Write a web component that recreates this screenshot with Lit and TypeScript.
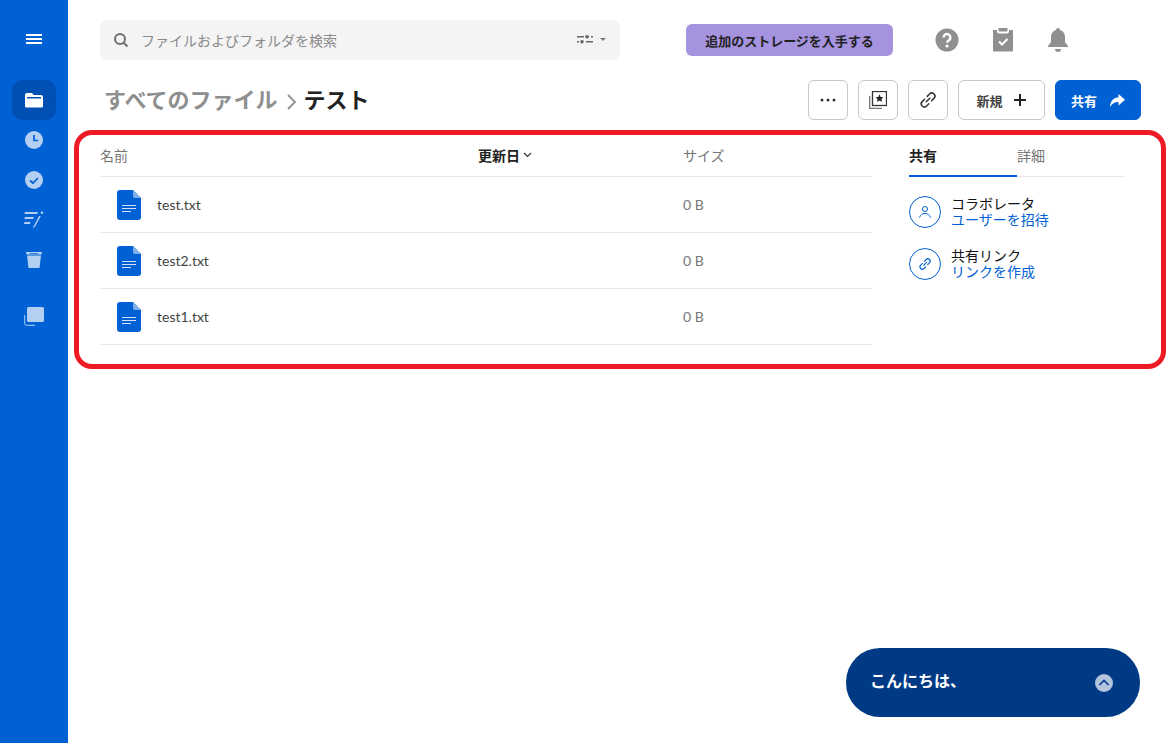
import { LitElement, html, css, svg } from "lit";
import { customElement } from "lit/decorators.js";

type FileRow = { name: string; size: string };

const FILES: FileRow[] = [
  { name: "test.txt", size: "0 B" },
  { name: "test2.txt", size: "0 B" },
  { name: "test1.txt", size: "0 B" },
];

const linkIcon = svg`<path d="M10.2 13.8l3.6-3.6M8.6 11.2l-2.4 2.4a3.1 3.1 0 0 0 4.4 4.4l2.2-2.2M11.2 8.4l2.4-2.4a3.1 3.1 0 0 1 4.4 4.4l-2.4 2.4" fill="none" stroke="currentColor" stroke-width="1.5" stroke-linecap="round"/>`;

@customElement("app-root")
export class AppRoot extends LitElement {
  static override styles = css`
    :host {
      display: flex;
      width: 1173px;
      height: 743px;
      overflow: hidden;
      position: relative;
      background: #fff;
      font-family: Lato, "Noto Sans CJK JP", sans-serif;
      color: #222;
    }
    svg {
      display: block;
      flex: none;
    }

    .rail {
      width: 68px;
      flex: none;
      background: #0061d5;
      display: flex;
      flex-direction: column;
      align-items: center;
      padding-top: 29px;
      box-sizing: border-box;
    }
    .rail .menu {
      margin-left: 0;
      margin-bottom: 31px;
    }
    .rail-item {
      width: 44px;
      height: 40px;
      display: flex;
      align-items: center;
      justify-content: center;
      border-radius: 10px;
      margin-bottom: 0;
    }
    .rail-item.active {
      background: #0050b3;
    }
    .rail-item.gap {
      margin-top: 16px;
    }

    main {
      flex: 1;
      min-width: 0;
      display: flex;
      flex-direction: column;
    }

    .top {
      display: flex;
      align-items: center;
      height: 40px;
      margin-top: 20px;
      padding-left: 32px;
    }
    .search {
      width: 520px;
      height: 40px;
      box-sizing: border-box;
      background: #f4f4f4;
      border-radius: 8px;
      display: flex;
      align-items: center;
      padding: 0 13px 0 13px;
      color: #8a8a8a;
      font-size: 14px;
    }
    .search span {
      flex: 1;
      margin-left: 12px;
    }
    .upsell {
      margin-left: 66px;
      width: 207px;
      height: 32px;
      border-radius: 6px;
      background: #a593e0;
      display: flex;
      align-items: center;
      justify-content: center;
      font-size: 13px;
      font-weight: 700;
      color: #222;
    }
    .top-icons {
      display: flex;
      margin-left: 42px;
      gap: 34px;
      color: #909090;
    }

    .title-row {
      display: flex;
      align-items: center;
      height: 40px;
      margin-top: 20px;
      padding: 0 32px 0 36px;
    }
    .crumbs {
      flex: 1;
      display: flex;
      align-items: center;
      font-size: 22px;
      font-weight: 700;
      line-height: 36px;
    }
    .crumbs .parent {
      color: #8f8f8f;
    }
    .crumbs .sep {
      margin: 4px 7px 0 8px;
    }
    .btn {
      height: 40px;
      box-sizing: border-box;
      border: 1px solid #c8c8c8;
      border-radius: 6px;
      background: #fff;
      display: flex;
      align-items: center;
      justify-content: center;
      margin-left: 10px;
      font-size: 13px;
      font-weight: 700;
      color: #444;
    }
    .btn.icon {
      width: 40px;
    }
    .btn.new {
      width: 87px;
      gap: 10px;
    }
    .btn.share {
      width: 86px;
      gap: 12px;
      background: #0061d5;
      border-color: #0061d5;
      color: #fff;
    }

    .content {
      display: flex;
      margin-top: 14px;
      padding-left: 32px;
    }
    .list {
      width: 772px;
      flex: none;
    }
    .cols {
      display: grid;
      grid-template-columns: 378px 205px 1fr;
      align-items: center;
      height: 42px;
      border-bottom: 1px solid #e8e8e8;
      font-size: 14px;
      color: #767676;
    }
    .cols .sorted {
      display: flex;
      align-items: center;
      gap: 3px;
      font-weight: 700;
      color: #222;
    }
    .cols .tools {
      display: flex;
      align-items: center;
      justify-content: flex-end;
      gap: 16px;
      padding-right: 5px;
    }
    .row {
      display: grid;
      grid-template-columns: 583px 1fr;
      align-items: center;
      height: 55px;
      border-bottom: 1px solid #e8e8e8;
      font-size: 14px;
      color: #444;
    }
    .row .name {
      display: flex;
      align-items: center;
      padding-left: 17px;
      gap: 16px;
    }
    .row .size {
      color: #767676;
    }

    .side {
      width: 216px;
      margin-left: 37px;
      flex: none;
    }
    .tabs {
      display: flex;
      height: 42px;
      border-bottom: 1px solid #e8e8e8;
      font-size: 14px;
      color: #767676;
    }
    .tab {
      width: 108px;
      display: flex;
      align-items: center;
      box-sizing: border-box;
    }
    .tab.active {
      font-weight: 700;
      color: #222;
      border-bottom: 2px solid #0061d5;
      margin-bottom: -1px;
    }
    .tab.second {
      margin-left: 0;
    }
    .actions {
      margin-top: 19px;
      display: flex;
      flex-direction: column;
      gap: 20px;
    }
    .action {
      display: flex;
      align-items: center;
      gap: 10px;
      height: 32px;
    }
    .circle {
      width: 32px;
      height: 32px;
      box-sizing: border-box;
      border: 1px solid #0061d5;
      border-radius: 50%;
      color: #0061d5;
      display: flex;
      align-items: center;
      justify-content: center;
    }
    .action .label {
      font-size: 14px;
      line-height: 16px;
      color: #111;
    }
    .action .link {
      font-size: 14px;
      line-height: 16px;
      color: #0061d5;
    }

    /* red annotation drawn on top of the screenshot */
    .callout {
      position: absolute;
      left: 74px;
      top: 130px;
      width: 1092px;
      height: 239px;
      box-sizing: border-box;
      border: 5px solid #ed1c24;
      border-radius: 18px;
      pointer-events: none;
    }

    .chat {
      position: absolute;
      left: 846px;
      top: 648px;
      width: 294px;
      height: 69px;
      box-sizing: border-box;
      border-radius: 34px;
      background: #003a85;
      color: #fff;
      display: flex;
      align-items: center;
      justify-content: space-between;
      padding: 0 27px 6px 24px;
      font-size: 16px;
      font-weight: 700;
    }
    .chat svg {
      margin-top: 6px;
    }
  `;

  private fileIcon() {
    return html`<svg width="24" height="30" viewBox="0 0 24 30">
      <path d="M3 0h13l8 8v19a3 3 0 0 1-3 3H3a3 3 0 0 1-3-3V3a3 3 0 0 1 3-3z" fill="#0061d5" />
      <path d="M16 0l8 8h-6a2 2 0 0 1-2-2z" fill="#7fb0ea" />
      <path d="M5 15h14v1H5zM5 18h14v1H5zM5 21h9v1H5z" fill="#cfe0f7" />
    </svg>`;
  }

  private renderRail() {
    return html`<nav class="rail">
      <svg class="menu" width="18" height="20" viewBox="0 0 18 20">
        <path d="M1 5h16v2H1zM1 9h16v2H1zM1 13h16v2H1z" fill="#fff" />
      </svg>
      <div class="rail-item active">
        <svg width="18" height="16" viewBox="0 0 18 16">
          <path d="M2 1h5l1.6 2H16a2 2 0 0 1 2 2v9a1.500 1.500 0 0 1-1.500 1.500h-15A1.500 1.500 0 0 1 0 14V3a2 2 0 0 1 2-2z" fill="#fff" />
          <path d="M2 5h14v1.500H2z" fill="#0050b3" />
        </svg>
      </div>
      <div class="rail-item">
        <svg width="18" height="18" viewBox="0 0 18 18">
          <circle cx="9" cy="9" r="9" fill="#b3cff2" />
          <path d="M9 4v5.500h4" fill="none" stroke="#0061d5" stroke-width="1.700" />
        </svg>
      </div>
      <div class="rail-item">
        <svg width="18" height="18" viewBox="0 0 18 18">
          <circle cx="9" cy="9" r="9" fill="#b3cff2" />
          <path d="M5 9.500l3 2.500 5-5" fill="none" stroke="#0061d5" stroke-width="1.700" />
        </svg>
      </div>
      <div class="rail-item">
        <svg width="20" height="18" viewBox="0 0 20 18">
          <path d="M1 1h13l-.8 2H.4zM1 6h9l-.8 2H.4zM.6 11h6l-.8 2H0z" fill="#b3cff2" />
          <path d="M15 5L8.800 17l2-1L16.800 5z" fill="#b3cff2" />
          <circle cx="18" cy="1.800" r="1.300" fill="#b3cff2" />
        </svg>
      </div>
      <div class="rail-item">
        <svg width="16" height="16" viewBox="0 0 16 16">
          <path d="M0 0h16l-.4 2.500H.4z" fill="#b3cff2" />
          <path d="M1 3.500h14L13.500 16h-11z" fill="#b3cff2" />
          <path d="M4 1.300h8v.8H4z" fill="#0061d5" />
        </svg>
      </div>
      <div class="rail-item gap">
        <svg width="20" height="19" viewBox="0 0 20 19">
          <rect x="3" y="0" width="17" height="15" rx="1.500" fill="#b3cff2" />
          <path d="M.7 8v8.500a1.800 1.800 0 0 0 1.800 1.800H11" fill="none" stroke="#b3cff2" stroke-width="1" />
        </svg>
      </div>
    </nav>`;
  }

  private renderTop() {
    return html`<div class="top">
      <div class="search">
        <svg width="16" height="16" viewBox="0 0 16 16">
          <circle cx="7" cy="7" r="5" fill="none" stroke="#6f6f6f" stroke-width="2" />
          <path d="M10.800 10.800L14.500 14.500" stroke="#6f6f6f" stroke-width="2" />
        </svg>
        <span>ファイルおよびフォルダを検索</span>
        <svg width="30" height="10" viewBox="0 0 30 10">
          <path d="M0 1h7v1.500H0zM10 1h2v1.500h-2zM14 1h2v1.500h-2zM0 6h2v1.500H0zM9 6h7v1.500H9z" fill="#666" />
          <circle cx="10" cy="1.800" r="1.800" fill="#666" />
          <circle cx="5" cy="6.800" r="1.800" fill="#666" />
          <path d="M23 3h6l-3 3z" fill="#777" />
        </svg>
      </div>
      <div class="upsell">追加のストレージを入手する</div>
      <div class="top-icons">
        <svg width="24" height="24" viewBox="0 0 24 24">
          <circle cx="12" cy="12" r="11.500" fill="#909090" />
          <path d="M8.600 9.500a3.400 3.400 0 1 1 5.300 2.800c-1.200.8-1.800 1.300-1.800 2.500" fill="none" stroke="#fff" stroke-width="2.400" />
          <circle cx="12" cy="18" r="1.600" fill="#fff" />
        </svg>
        <svg width="20" height="24" viewBox="0 0 20 24">
          <path d="M0 2h4v1.500a2 2 0 0 0 2 2h8a2 2 0 0 0 2-2V2h4v20.500a1 1 0 0 1-1 1H1a1 1 0 0 1-1-1z" fill="#909090" />
          <path d="M5.500 0h9v2.500a1 1 0 0 1-1 1h-7a1 1 0 0 1-1-1z" fill="#909090" />
          <path d="M6 13.500l3 3 5.500-5.500" fill="none" stroke="#fff" stroke-width="2" />
        </svg>
        <svg width="22" height="24" viewBox="0 0 22 24">
          <path d="M11 0a2 2 0 0 1 2 2c3.500 1 5 3.800 5 7v5l3 4v1H1v-1l3-4V9c0-3.200 1.500-6 5-7a2 2 0 0 1 2-2z" fill="#909090" />
          <path d="M8 21h6a3 3 0 0 1-6 0z" fill="#909090" />
        </svg>
      </div>
    </div>`;
  }

  private renderTitle() {
    return html`<div class="title-row">
      <div class="crumbs">
        <span class="parent">すべてのファイル</span>
        <svg class="sep" width="11" height="18" viewBox="0 0 11 18">
          <path d="M2 2l7 7-7 7" fill="none" stroke="#8f8f8f" stroke-width="1.800" />
        </svg>
        <span>テスト</span>
      </div>
      <div class="btn icon">
        <svg width="18" height="4" viewBox="0 0 18 4">
          <circle cx="3" cy="2" r="1.500" fill="#333" />
          <circle cx="9" cy="2" r="1.500" fill="#333" />
          <circle cx="15" cy="2" r="1.500" fill="#333" />
        </svg>
      </div>
      <div class="btn icon">
        <svg width="18" height="18" viewBox="0 0 18 18">
          <rect x="3.500" y=".5" width="14" height="14" fill="none" stroke="#333" stroke-width="1.300" />
          <path d="M.7 5v12.300H13" fill="none" stroke="#777" stroke-width="1.300" />
          <path d="M10.500 3.300l1.200 2.600 2.800.3-2.100 1.900.6 2.800-2.500-1.400L8 11l.6-2.800-2.100-1.900 2.800-.3z" fill="#222" />
        </svg>
      </div>
      <div class="btn icon">
        <svg width="24" height="24" viewBox="0 0 24 24" style="color:#333">${linkIcon}</svg>
      </div>
      <div class="btn new">
        <span>新規</span>
        <svg width="14" height="14" viewBox="0 0 14 14">
          <path d="M6 1h2v5h5v2H8v5H6V8H1V6h5z" fill="#222" />
        </svg>
      </div>
      <div class="btn share">
        <span>共有</span>
        <svg width="16" height="13" viewBox="0 0 16 13">
          <path d="M9.500 0L16 5.800l-6.500 5.700V8C5.500 8 3 9.500 1 13c.3-5.500 3.300-9.300 8.500-9.700z" fill="#fff" />
        </svg>
      </div>
    </div>`;
  }

  private renderList() {
    return html`<section class="list">
      <div class="cols">
        <span>名前</span>
        <span class="sorted">
          更新日
          <svg width="9" height="6" viewBox="0 0 9 6">
            <path d="M1 1l3.500 3.500L8 1" fill="none" stroke="#333" stroke-width="1.200" />
          </svg>
        </span>
        <div style="display:contents">
          <span class="tools-size">サイズ</span>
        </div>
      </div>
      ${FILES.map(
        (f) => html`<div class="row">
          <div class="name">${this.fileIcon()}<span>${f.name}</span></div>
          <span class="size">${f.size}</span>
        </div>`
      )}
    </section>`;
  }

  private renderSide() {
    return html`<aside class="side">
      <div class="tabs">
        <div class="tab active">共有</div>
        <div class="tab">詳細</div>
      </div>
      <div class="actions">
        <div class="action">
          <div class="circle">
            <svg width="14" height="14" viewBox="0 0 14 14">
              <circle cx="7" cy="4" r="2.500" fill="none" stroke="currentColor" stroke-width="1" />
              <path d="M1.500 12.500c1-3 3-4 5.500-4s4.500 1 5.500 4" fill="none" stroke="currentColor" stroke-width="1" />
            </svg>
          </div>
          <div>
            <div class="label">コラボレータ</div>
            <div class="link">ユーザーを招待</div>
          </div>
        </div>
        <div class="action">
          <div class="circle">
            <svg width="18" height="18" viewBox="0 0 24 24">${linkIcon}</svg>
          </div>
          <div>
            <div class="label">共有リンク</div>
            <div class="link">リンクを作成</div>
          </div>
        </div>
      </div>
    </aside>`;
  }

  override render() {
    return html`
      ${this.renderRail()}
      <main>
        ${this.renderTop()} ${this.renderTitle()}
        <div class="content">${this.renderList()} ${this.renderSide()}</div>
      </main>
      <div class="callout"></div>
      <div class="chat">
        <span>こんにちは、</span>
        <svg width="18" height="18" viewBox="0 0 18 18">
          <circle cx="9" cy="9" r="9" fill="#b3c4dd" />
          <path d="M4.500 11l4.500-4.500 4.500 4.500" fill="none" stroke="#003a85" stroke-width="1.600" />
        </svg>
      </div>
    `;
  }
}

declare global {
  interface HTMLElementTagNameMap {
    "app-root": AppRoot;
  }
}
